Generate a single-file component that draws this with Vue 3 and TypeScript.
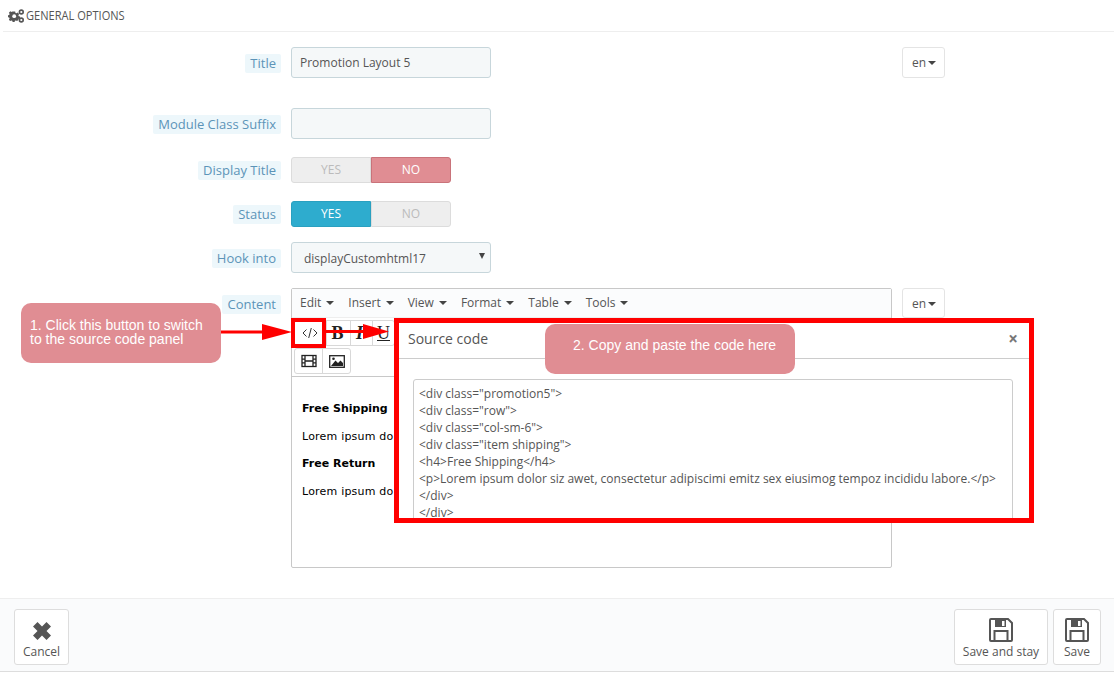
<script setup lang="ts">
const menus: string[] = ['Edit', 'Insert', 'View', 'Format', 'Table', 'Tools']
const codeLines: string[] = [
  '<div class="promotion5">',
  '<div class="row">',
  '<div class="col-sm-6">',
  '<div class="item shipping">',
  '<h4>Free Shipping</h4>',
  '<p>Lorem ipsum dolor siz awet, consectetur adipiscimi emitz sex eiusimog tempoz incididu labore.</p>',
  '</div>',
  '</div>'
]
</script>

<template>
  <div class="page">
    <header class="head">
      <svg class="gears" viewBox="0 0 16 14" width="16" height="14">
        <g fill="#555">
          <path d="M5.200 2.600h2l.3 1.300 1 .4 1.200-.7 1.400 1.400-.7 1.200.4 1 1.300.3v2l-1.300.3-.4 1-.2.2-1.100.9-1.200-.5-1 .4-.3 1.300h-2l-.3-1.300-1-.4-1.200.7L.9 10.700l.7-1.200-.4-1L0 8.200v-2l1.200-.3.4-1-.7-1.200 1.400-1.400 1.200.7 1-.4z" fill-rule="evenodd"/>
        </g>
        <circle cx="6.200" cy="7.200" r="1.900" fill="#fff"/>
        <circle cx="13.300" cy="3" r="1.900" fill="none" stroke="#555" stroke-width="1.600"/>
        <circle cx="13.300" cy="11" r="1.900" fill="none" stroke="#555" stroke-width="1.600"/>
      </svg>
      <span class="head-text">GENERAL OPTIONS</span>
    </header>

    <div class="row row-title">
      <div class="label-col"><span class="label">Title</span></div>
      <div class="field"><div class="input">Promotion Layout 5</div></div>
      <div class="lang">en<i class="caret"></i></div>
    </div>

    <div class="row row-suffix">
      <div class="label-col"><span class="label">Module Class Suffix</span></div>
      <div class="field"><div class="input"></div></div>
    </div>

    <div class="row row-display">
      <div class="label-col"><span class="label">Display Title</span></div>
      <div class="field">
        <div class="toggle">
          <span class="opt off">YES</span>
          <span class="opt no">NO</span>
        </div>
      </div>
    </div>

    <div class="row row-status">
      <div class="label-col"><span class="label">Status</span></div>
      <div class="field">
        <div class="toggle">
          <span class="opt yes">YES</span>
          <span class="opt off">NO</span>
        </div>
      </div>
    </div>

    <div class="row row-hook">
      <div class="label-col"><span class="label">Hook into</span></div>
      <div class="field">
        <div class="input select">displayCustomhtml17<i class="sel-arrow"></i></div>
      </div>
    </div>

    <div class="row row-content">
      <div class="label-col"><span class="label">Content</span></div>
      <div class="field">
        <div class="editor">
          <div class="menubar">
            <span v-for="m in menus" :key="m" class="menu">{{ m }}<i class="caret"></i></span>
          </div>
          <div class="toolbar">
            <div class="tool-row">
              <div class="group">
                <span class="tool t-code">
                  <svg viewBox="0 0 16 12" width="16" height="12" fill="none" stroke="#333" stroke-width="1">
                    <path d="M4.500 2.500 1 6l3.500 3.500M11.500 2.500 15 6l-3.500 3.500M9.300 1 6.700 11" />
                  </svg>
                </span>
                <span class="tool t-b">B</span>
                <span class="tool t-i">I</span>
                <span class="tool t-u">U</span>
              </div>
            </div>
            <div class="tool-row second">
              <div class="group">
                <span class="tool t-film">
                  <svg viewBox="0 0 16 14" width="16" height="14" fill="none" stroke="#222" stroke-width="1.300">
                    <rect x="1" y="1.500" width="14" height="11" />
                    <path d="M4 1.500v11M12 1.500v11M1 5.200h3M1 8.800h3M12 5.200h3M12 8.800h3M4 7h8" />
                  </svg>
                </span>
                <span class="tool t-pic">
                  <svg viewBox="0 0 16 13" width="16" height="13">
                    <rect x=".7" y=".7" width="14.600" height="11.600" fill="#fff" stroke="#222" stroke-width="1.300" />
                    <path d="M2 11 6.500 5.500l2.500 2.500 2.500-2.500L14 8v3z" fill="#222" />
                    <circle cx="4.500" cy="3.800" r="1.300" fill="#222" />
                  </svg>
                </span>
              </div>
            </div>
          </div>
          <div class="body">
            <p class="b"><strong>Free Shipping</strong></p>
            <p class="b lorem">Lorem ipsum do</p>
            <p class="b"><strong>Free Return</strong></p>
            <p class="b lorem">Lorem ipsum do</p>
          </div>
        </div>
      </div>
      <div class="lang lang-small">en<i class="caret"></i></div>
    </div>

    <footer class="foot">
      <div class="btn btn-cancel">
        <svg viewBox="0 0 20 20" width="20" height="20">
          <path d="M5.500 1 10 5.500 14.500 1l4.500 4.500L14.500 10l4.500 4.500-4.500 4.500L10 14.500 5.500 19 1 14.500 5.500 10 1 5.500z" fill="#555" />
        </svg>
        <span>Cancel</span>
      </div>
      <div class="foot-right">
        <div class="btn btn-stay">
          <svg class="disk" viewBox="0 0 24 24" width="24" height="24">
            <path d="M2 1h17l4 4v17a1 1 0 0 1-1 1H2a1 1 0 0 1-1-1V2a1 1 0 0 1 1-1z" fill="none" stroke="#555" stroke-width="2" />
            <path d="M6 2h11v7H6z" fill="#555" />
            <path d="M13 3h2.500v5H13z" fill="#fff" />
            <path d="M5.500 22v-9h13v9" fill="none" stroke="#555" stroke-width="2" />
          </svg>
          <span>Save and stay</span>
        </div>
        <div class="btn btn-save">
          <svg class="disk" viewBox="0 0 24 24" width="24" height="24">
            <path d="M2 1h17l4 4v17a1 1 0 0 1-1 1H2a1 1 0 0 1-1-1V2a1 1 0 0 1 1-1z" fill="none" stroke="#555" stroke-width="2" />
            <path d="M6 2h11v7H6z" fill="#555" />
            <path d="M13 3h2.500v5H13z" fill="#fff" />
            <path d="M5.500 22v-9h13v9" fill="none" stroke="#555" stroke-width="2" />
          </svg>
          <span>Save</span>
        </div>
      </div>
    </footer>

    <!-- overlays -->
    <div class="modal">
      <div class="modal-head">
        <span>Source code</span>
        <b class="close">×</b>
      </div>
      <div class="modal-body">
        <div class="code">
          <div v-for="(l, i) in codeLines" :key="i" class="code-line">{{ l }}</div>
        </div>
      </div>
    </div>

    <div class="mark"></div>

    <svg class="arrows" viewBox="0 0 400 40" width="400" height="40">
      <path d="M0 13.500h45v3H0z" fill="#f00" />
      <path d="M42 7l30 8-30 8z" fill="#f00" />
      <path d="M106 13h40v3h-40z" fill="#f00" />
      <path d="M143 7l26 7.500-26 7.500z" fill="#f00" />
    </svg>

    <div class="callout c1">1. Click this button to switch<br />to the source code panel</div>
    <div class="callout c2">2. Copy and paste the code here</div>
  </div>
</template>

<style scoped>
.page {
  position: relative;
  width: 1114px;
  height: 674px;
  overflow: hidden;
  background: #fff;
  font-family: "Open Sans", sans-serif;
  color: #555;
}
.head {
  display: flex;
  align-items: center;
  height: 31px;
  margin-left: 3px;
  padding-left: 5px;
  border-bottom: 1px solid #eee;
}
.gears { flex: none; }
.head-text {
  display: inline-block;
  margin-left: 2px;
  margin-bottom: 2px;
  font-size: 13.500px;
  color: #555;
  white-space: nowrap;
  transform: scaleX(.82);
  transform-origin: left center;
}
.row { display: flex; align-items: flex-start; }
.row-title { margin-top: 15px; }
.row-suffix { margin-top: 30px; }
.row-display { margin-top: 18px; }
.row-status { margin-top: 18px; }
.row-hook { margin-top: 15px; }
.row-content { margin-top: 15px; }
.label-col {
  flex: none;
  width: 281px;
  margin-right: 10px;
  display: flex;
  justify-content: flex-end;
}
.label {
  margin-top: 7px;
  padding: 0 5px;
  height: 19px;
  line-height: 18px;
  font-size: 13px;
  color: #5c94b8;
  background: #edf7fb;
  border-radius: 2px;
  white-space: nowrap;
}
.row-display .label, .row-status .label { margin-top: 4px; }
.field { flex: none; width: 601px; }
.input {
  box-sizing: border-box;
  width: 200px;
  height: 31px;
  padding-left: 8px;
  line-height: 29px;
  font-size: 12px;
  color: #555;
  background: #f5f8f9;
  border: 1px solid #c7d6db;
  border-radius: 3px;
}
.select { position: relative; padding-left: 12px; line-height: 31px; }
.sel-arrow {
  position: absolute;
  right: 5px;
  top: 10px;
  width: 0;
  height: 0;
  border-left: 3.500px solid transparent;
  border-right: 3.500px solid transparent;
  border-top: 6px solid #444;
}
.toggle { display: flex; width: 160px; height: 26px; }
.opt {
  box-sizing: border-box;
  width: 80px;
  height: 26px;
  line-height: 24px;
  text-align: center;
  font-size: 12px;
  border: 1px solid transparent;
}
.opt:first-child { border-radius: 3px 0 0 3px; }
.opt:last-child { border-radius: 0 3px 3px 0; }
.off { background: #eee; color: #bbb; border-color: #dcdcdc; }
.no { background: #e08d93; color: #fff; border-color: #c9737a; border-radius: 3px; }
.yes { background: #2eacce; color: #fff; border-color: #2aa0c0; }
.lang {
  box-sizing: border-box;
  flex: none;
  width: 43px;
  height: 31px;
  margin-left: 10px;
  line-height: 29px;
  padding-left: 9px;
  font-size: 12px;
  color: #555;
  border: 1px solid #e4e4e4;
  border-radius: 3px;
}
.lang .caret { margin-left: 2px; border-top-color: #444; vertical-align: 2px; }
.lang-small { height: 30px; line-height: 30px; }
.caret {
  display: inline-block;
  width: 0;
  height: 0;
  margin-left: 5px;
  vertical-align: 2px;
  border-left: 4px solid transparent;
  border-right: 4px solid transparent;
  border-top: 4px solid #444;
}
.editor {
  box-sizing: border-box;
  width: 601px;
  height: 280px;
  border: 1px solid #c8c8c8;
  border-radius: 2px;
}
.menubar {
  display: flex;
  height: 29px;
  padding: 0 0 2px 8px;
  gap: 14px;
  align-items: center;
  background: #fbfcfd;
  border-bottom: 1px solid #eee;
  box-sizing: border-box;
  font-size: 12px;
  color: #555;
}
.menu { white-space: nowrap; }
.toolbar {
  box-sizing: border-box;
  height: 59px;
  padding: 2px 0 0 2px;
  border-bottom: 1px solid #c8c8c8;
}
.tool-row { height: 26px; margin-bottom: 2px; display: flex; }
.group {
  display: flex;
  border: 1px solid #d8d8d8;
  border-radius: 3px;
  height: 26px;
  box-sizing: border-box;
}
.tool {
  display: flex;
  align-items: center;
  justify-content: center;
  box-sizing: border-box;
  height: 24px;
  width: 22px;
  border-left: 1px solid #d8d8d8;
  color: #222;
  font-family: "Liberation Serif", serif;
  font-size: 18px;
}
.tool:first-child { border-left: 0; }
.t-code { width: 31px; padding-right: 2px; }
.t-b { width: 24px; padding-right: 2px; font-weight: bold; }
.t-i { padding-right: 4px; font-style: italic; font-weight: bold; }
.t-u { text-decoration: underline; }
.t-film { width: 27px; }
.t-pic { width: 28px; }
.body {
  padding: 25px 10px 0;
  font-family: "DejaVu Sans", sans-serif;
  font-size: 11px;
  color: #000;
}
.b { margin: 0 0 14px; line-height: 13.500px; white-space: nowrap; }
.lorem { letter-spacing: .2px; }
.foot {
  position: absolute;
  left: 0;
  right: 0;
  top: 598px;
  height: 74px;
  box-sizing: border-box;
  display: flex;
  justify-content: space-between;
  padding: 10px 13px 0 14px;
  background: #fafbfc;
  border-top: 1px solid #eee;
  border-bottom: 1px solid #ddd;
}
.foot-right { display: flex; gap: 5px; }
.btn {
  box-sizing: border-box;
  height: 56px;
  display: flex;
  flex-direction: column;
  align-items: center;
  padding-top: 8px;
  background: #fff;
  border: 1px solid #ddd;
  border-radius: 3px;
  font-size: 12px;
  line-height: 16px;
  color: #555;
  white-space: nowrap;
}
.btn svg { flex: none; margin-bottom: 2px; }
.btn-cancel { width: 55px; padding-top: 11px; }
.btn-stay { width: 94px; }
.btn-save { width: 48px; }
.btn-cancel svg { margin-bottom: 3px; }
.modal {
  position: absolute;
  left: 394px;
  top: 318px;
  box-sizing: border-box;
  width: 640px;
  height: 205px;
  background: #fff;
  border: 5px solid #f00;
  overflow: hidden;
}
.modal-head {
  display: flex;
  justify-content: space-between;
  align-items: center;
  box-sizing: border-box;
  height: 36px;
  padding: 0 11px 4px 9px;
  font-size: 14px;
  color: #555;
  border-bottom: 1px solid #ccc;
}
.close { font-size: 17px; color: #777; }
.modal-body { padding: 20px 16px 0 14px; }
.code {
  box-sizing: border-box;
  height: 200px;
  padding: 5px;
  border: 1px solid #ccc;
  border-radius: 3px;
  font-size: 12px;
  line-height: 17px;
  color: #555;
  white-space: nowrap;
}
.mark {
  position: absolute;
  left: 291px;
  top: 318px;
  box-sizing: border-box;
  width: 35px;
  height: 30px;
  border: 4px solid #f00;
}
.arrows { position: absolute; left: 220px; top: 317px; }
.callout {
  position: absolute;
  box-sizing: border-box;
  background: #e08d93;
  color: #fff;
  border-radius: 10px;
  font-family: "Liberation Sans", sans-serif;
  font-size: 14px;
}
.c1 {
  left: 21px;
  top: 303px;
  width: 200px;
  height: 60px;
  padding: 15px 0 0 9px;
  line-height: 14px;
}
.c2 {
  left: 545px;
  top: 324px;
  width: 250px;
  height: 50px;
  padding: 13px 0 0 28px;
  line-height: 16px;
}
</style>

<style>
html, body { margin: 0; background: #fff; }
</style>
